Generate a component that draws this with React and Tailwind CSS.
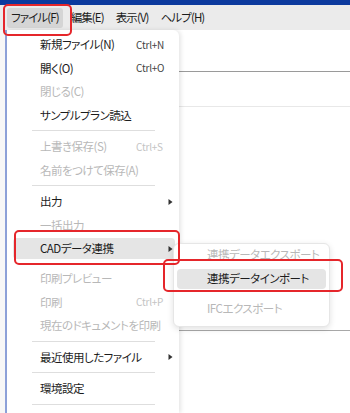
const FONT = "font-['Noto_Sans_CJK_JP','Noto_Sans',sans-serif] [font-feature-settings:'palt']";

const items = [
  { label: "新規ファイル(N)", sc: "Ctrl+N" },
  { label: "開く(O)", sc: "Ctrl+O" },
  { label: "閉じる(C)", disabled: true },
  { label: "サンプルプラン読込" },
  "sep",
  { label: "上書き保存(S)", sc: "Ctrl+S", disabled: true },
  { label: "名前をつけて保存(A)", disabled: true },
  "sep",
  { label: "出力", sub: true },
  { label: "一括出力", disabled: true },
  { label: "CADデータ連携", sub: true, active: true },
  { label: "印刷プレビュー", disabled: true },
  { label: "印刷", sc: "Ctrl+P", disabled: true },
  { label: "現在のドキュメントを印刷", disabled: true },
  "sep",
  { label: "最近使用したファイル", sub: true },
  "sep",
  { label: "環境設定" },
  "sep",
];

const Arrow = () => (
  <svg width="5" height="8" viewBox="0 0 5 8" className="ml-auto mr-[2px]">
    <polygon points="0.5,1 4.5,4 0.5,7" fill="#333" />
  </svg>
);

const MenuItem = ({ item }) => {
  const color = item.disabled ? "text-[#b8b8b8]" : "text-[#1c1c1c]";
  const row = (
    <div
      className={`flex items-center ml-[6px] mr-[4px] pl-[27px] rounded-[4px] ${
        item.active ? "h-[21px] bg-[#e5e5e5]" : "h-[23.5px]"
      }`}
    >
      <span
        className={`w-[96px] shrink-0 whitespace-nowrap text-[11.5px] leading-none tracking-[-0.5px] ${color}`}
      >
        {item.label}
      </span>
      {item.sc && (
        <span
          className={`text-[10px] leading-none tracking-[-0.2px] ${
            item.disabled ? "text-[#c4c4c4]" : "text-[#444]"
          }`}
        >
          {item.sc}
        </span>
      )}
      {item.sub && <Arrow />}
    </div>
  );
  if (item.active) return <div className="h-[30px] pt-[1px]">{row}</div>;
  return row;
};

const SubItem = ({ label, disabled, active, className = "" }) => (
  <div
    className={`flex items-center mx-[3px] pl-[30px] rounded-[4px] text-[11.5px] leading-none tracking-[-0.5px] whitespace-nowrap ${
      active ? "bg-[#e5e5e5] text-[#1c1c1c] h-[20px]" : "h-[22px]"
    } ${disabled ? "text-[#b8b8b8]" : ""} ${className}`}
  >
    {label}
  </div>
);

export default function App() {
  const top = ["ファイル(F)", "編集(E)", "表示(V)", "ヘルプ(H)"];
  return (
    <div className={`relative w-[350px] h-[413px] overflow-hidden bg-white ${FONT}`}>
      <div className="h-[5px] bg-[#0c3a9e]" />

      {/* menu bar */}
      <div className="h-[25px] bg-[#ebebeb] flex items-center pl-[7px] gap-[4px]">
        {top.map((t, i) => (
          <div
            key={t}
            className={`h-[20px] px-[4px] flex items-center rounded-[3px] text-[11.5px] leading-none tracking-[-0.9px] text-[#1c1c1c] whitespace-nowrap ${
              i === 0 ? "bg-[#d5d5d5]" : ""
            }`}
          >
            {t}
          </div>
        ))}
      </div>

      <div className="flex">
        <div className="w-[5px] bg-[#f7f7f7]" />
        <div className="w-[2px] h-[383px] bg-[#8ea2da]" />

        {/* file menu */}
        <div className="w-[172px] pt-[3px] bg-white rounded-tr-[6px] shadow-[2px_0_4px_rgba(0,0,0,0.10)] relative z-10">
          {items.map((it, i) =>
            it === "sep" ? (
              <div key={i} className="ml-[25px] w-[123px] h-px mt-[3px] mb-[4px] bg-[#dedede]" />
            ) : (
              <MenuItem key={i} item={it} />
            )
          )}
        </div>

        {/* document area */}
        <div className="flex-1">
          <div className="mt-[41px] h-px bg-[#9a9a9a]" />
          <div className="mt-[34px] h-px bg-[#e8e8e8]" />
          <div className="mt-[223px] h-px bg-[#a8a8a8]" />
        </div>
      </div>

      {/* sub menu */}
      <div className="absolute left-[173px] top-[243px] w-[157px] h-[84px] bg-white rounded-[6px] border border-[#e6e6e6] shadow-[0_2px_6px_rgba(0,0,0,0.12)] z-20">
        <SubItem label="連携データエクスポート" disabled />
        <SubItem label="連携データインポート" active className="mt-[3px]" />
        <SubItem label="IFCエクスポート" disabled className="mt-[9px]" />
      </div>

      {/* annotations */}
      <div className="absolute left-[3px] top-[4px] w-[69px] h-[32px] border-2 border-[#e5262b] rounded-[5px] z-30" />
      <div className="absolute left-[14px] top-[230px] w-[166px] h-[35px] border-2 border-[#e5262b] rounded-[5px] z-30" />
      <div className="absolute left-[163px] top-[259px] w-[180px] h-[33px] border-2 border-[#e5262b] rounded-[5px] z-30" />
    </div>
  );
}
